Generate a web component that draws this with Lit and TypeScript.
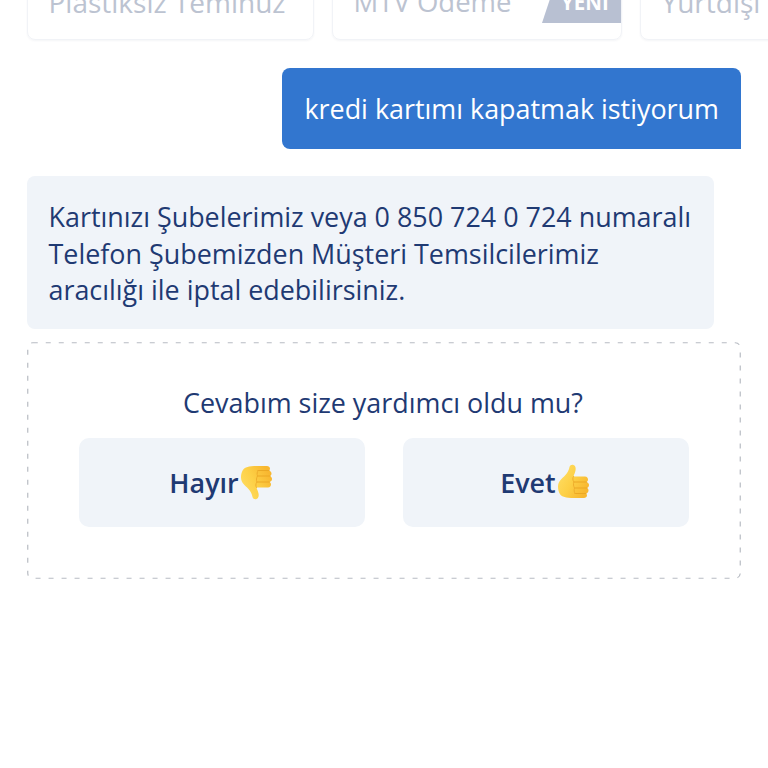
import { LitElement, html, css, svg } from "lit";
import { customElement } from "lit/decorators.js";

const thumb = (id: string) => svg`
  <defs>
    <linearGradient id=${id} x1="0" y1="0" x2="1" y2="0.6">
      <stop offset="0" stop-color="#ffe06a" />
      <stop offset="0.55" stop-color="#fdd046" />
      <stop offset="1" stop-color="#f8b730" />
    </linearGradient>
  </defs>
  <path
    d="M1 22C1 17 5 14 8 11C11 8 12 5 12.5 2.5C13 .5 15 0 16.500 .5C18.500 1.200 19 3.500 18.500 6C18 8.500 17 10 16.500 12L28 12C30 12 31 13.500 31 15C31 16.200 30.500 17 29.500 17.500C31 18 32 19 32 20.500C32 22 31 23 30 23.500C31 24 31.500 25 31.500 26C31.500 27.500 30.500 28.500 29 29C29.500 29.500 30 30 30 31C30 32.500 28.500 33.500 27 33.500L14 33.500C10 33.500 8 32.500 6 32C3 31 1 27 1 22Z"
    fill="url(#${id})"
  />
  <path
    d="M17 17.500H29.500M17.500 23.500H30M18 29H29"
    fill="none"
    stroke="#eba824"
    stroke-width="1.100"
    stroke-linecap="round"
  />
  <path d="M16.500 12C15.500 13.500 15.500 15.500 17 17.500C16 19 16.500 22 17.500 23.500C17 25.500 17 27.500 18 29" fill="none" stroke="#efae2c" stroke-width="1" stroke-linecap="round" />
`;

@customElement("app-root")
export class AppRoot extends LitElement {
  static styles = css`
    :host {
      display: block;
      position: relative;
      width: 768px;
      height: 768px;
      overflow: hidden;
      background: #fff;
      font-family: "Open Sans", "Noto Sans", sans-serif;
      color: #1f3a73;
    }
    .tiles {
      display: flex;
      gap: 18px;
      margin-top: -40px;
      padding-left: 27px;
      width: 900px;
    }
    .tile {
      position: relative;
      box-sizing: border-box;
      height: 80px;
      border: 1px solid #f1f3f7;
      border-radius: 8px;
      box-shadow: 0 1px 2px rgba(40, 60, 100, 0.05);
      padding: 22.500px 0 0 20.500px;
      font-size: 28px;
      line-height: 36px;
      color: #bcc3d1;
      white-space: nowrap;
      overflow: hidden;
      flex: none;
    }
    .t1 { width: 287px; }
    .t2 { width: 290px; font-size: 27.500px; }
    .t3 { width: 200px; }
    .badge {
      position: absolute;
      right: 0;
      top: 24px;
      width: 79px;
      height: 38px;
      background: #b8c0d2;
      clip-path: polygon(16% 0, 100% 0, 100% 100%, 0 100%);
      color: #fff;
      font-size: 20.500px;
      font-weight: 700;
      line-height: 24px;
      box-sizing: border-box;
      padding: 5px 0 0 19px;
    }
    .bubble-row {
      display: flex;
      justify-content: flex-end;
      padding-right: 27px;
      margin-top: 28px;
    }
    .user {
      box-sizing: border-box;
      height: 81px;
      padding: 0 22px 1px;
      display: flex;
      align-items: center;
      background: #3276cf;
      color: #fff;
      font-size: 26.900px;
      border-radius: 8px 8px 0 8px;
      white-space: nowrap;
    }
    .bot {
      box-sizing: border-box;
      width: 687px;
      height: 153px;
      margin: 27px 0 0 27px;
      padding: 23px 21.500px;
      background: #f0f4f9;
      border-radius: 8px;
      font-size: 26.900px;
      line-height: 36.500px;
      white-space: nowrap;
    }
    .feedback {
      position: relative;
      box-sizing: border-box;
      width: 714px;
      height: 237px;
      margin: 13px 0 0 27px;
      padding-top: 43px;
      text-align: center;
      font-size: 26.900px;
      line-height: 36px;
    }
    .dash {
      position: absolute;
      inset: 0;
      width: 714px;
      height: 237px;
    }
    .question { padding-right: 2px; }
    .buttons {
      display: flex;
      justify-content: center;
      gap: 38px;
      margin-top: 17px;
    }
    .btn {
      box-sizing: border-box;
      width: 286px;
      height: 89px;
      padding-right: 2px;
      display: flex;
      align-items: center;
      justify-content: center;
      background: #f0f4f9;
      border-radius: 10px;
      font-weight: 600;
      font-size: 26.900px;
    }
    .btn svg { width: 33px; height: 35px; flex: none; margin-left: 1px; }
    .down { transform: scaleY(-1); }
    .up { transform: translateY(-1px); }
  `;

  render() {
    return html`
      <div class="tiles">
        <div class="tile t1">Plastiksiz Teminuz</div>
        <div class="tile t2">MTV Ödeme<span class="badge">YENİ</span></div>
        <div class="tile t3">Yurtdışı</div>
      </div>
      <div class="bubble-row"><div class="user">kredi kartımı kapatmak istiyorum</div></div>
      <div class="bot">Kartınızı Şubelerimiz veya 0 850 724 0 724 numaralı<br />Telefon Şubemizden Müşteri Temsilcilerimiz<br />aracılığı ile iptal edebilirsiniz.</div>
      <div class="feedback">
        <svg class="dash" viewBox="0 0 714 237">
          <rect x="0.75" y="0.75" width="712.5" height="235.5" rx="5" fill="none" stroke="#b8bcc3" stroke-width="1.200" stroke-dasharray="5 8" />
        </svg>
        <div class="question">Cevabım size yardımcı oldu mu?</div>
        <div class="buttons">
          <div class="btn">Hayır<svg class="down" viewBox="0 0 33 34">${thumb("gd")}</svg></div>
          <div class="btn">Evet<svg class="up" viewBox="0 0 33 34">${thumb("gu")}</svg></div>
        </div>
      </div>
    `;
  }
}
